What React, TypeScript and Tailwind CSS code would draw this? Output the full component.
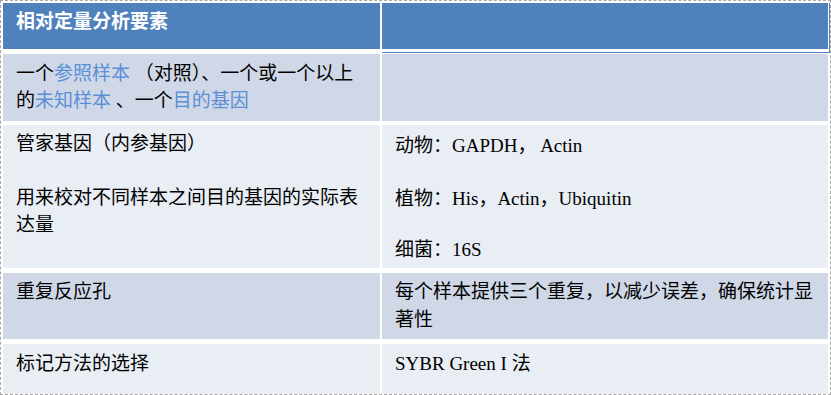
import React from 'react';

const font = 'font-["Liberation_Serif","Noto_Sans_CJK_SC",serif]';
const hl = 'text-[#5b8fd6]';

export default function App() {
  return (
    <div className={`w-[831px] h-[395px] overflow-hidden bg-white border border-dashed border-[#a6a6a6] pt-[2px] pl-[2px] text-[19px] leading-[27px] text-black ${font}`}>
      <div className="flex flex-col">
        {/* header */}
        <div className="flex gap-[2px] h-[50px]">
          <div className="w-[377px] h-[46px] bg-[#4f81bd] px-[13px] pt-[5px] text-white font-bold">
            相对定量分析要素
          </div>
          <div className="w-[448px] h-[50px] border-r border-b border-[#4f81bd] pr-px pb-[3px] bg-white">
            <div className="h-[46px] bg-[#4f81bd]" />
          </div>
        </div>

        {/* row 2 */}
        <div className="flex gap-[2px] h-[67px] mt-px">
          <div className="w-[377px] bg-[#d0d8e8] px-[13px] pt-[6px] whitespace-nowrap">
            一个<span className={hl}>参照样本</span> （对照）、一个或一个以上
            <br />
            的<span className={hl}>未知样本</span> 、一个<span className={hl}>目的基因</span>
          </div>
          <div className="w-[446px] bg-[#d0d8e8]" />
        </div>

        {/* row 3 */}
        <div className="flex gap-[2px] h-[143px] mt-[4px]">
          <div className="w-[377px] bg-[#e9edf4] px-[13px] pt-[5px] whitespace-nowrap">
            <div>管家基因（内参基因）</div>
            <div className="mt-[27px]">用来校对不同样本之间目的基因的实际表</div>
            <div>达量</div>
          </div>
          <div className="w-[446px] bg-[#e9edf4] px-[13px] pt-[7px] whitespace-nowrap flex flex-col">
            <div>动物：GAPDH， Actin</div>
            <div className="mt-[26px]">植物：His，Actin，Ubiquitin</div>
            <div className="mt-[24px]">细菌：16S</div>
          </div>
        </div>

        {/* row 4 */}
        <div className="flex gap-[2px] h-[66px] mt-[5px]">
          <div className="w-[377px] bg-[#d0d8e8] px-[13px] pt-[5px]">重复反应孔</div>
          <div className="w-[446px] bg-[#d0d8e8] px-[13px] pt-[5px] whitespace-nowrap leading-[28px]">
            每个样本提供三个重复，以减少误差，确保统计显
            <br />
            著性
          </div>
        </div>

        {/* row 5 */}
        <div className="flex gap-[2px] h-[52px] mt-[5px]">
          <div className="w-[377px] bg-[#e9edf4] px-[13px] pt-[6px]">标记方法的选择</div>
          <div className="w-[446px] bg-[#e9edf4] px-[13px] pt-[6px]">SYBR Green I 法</div>
        </div>
      </div>
    </div>
  );
}
